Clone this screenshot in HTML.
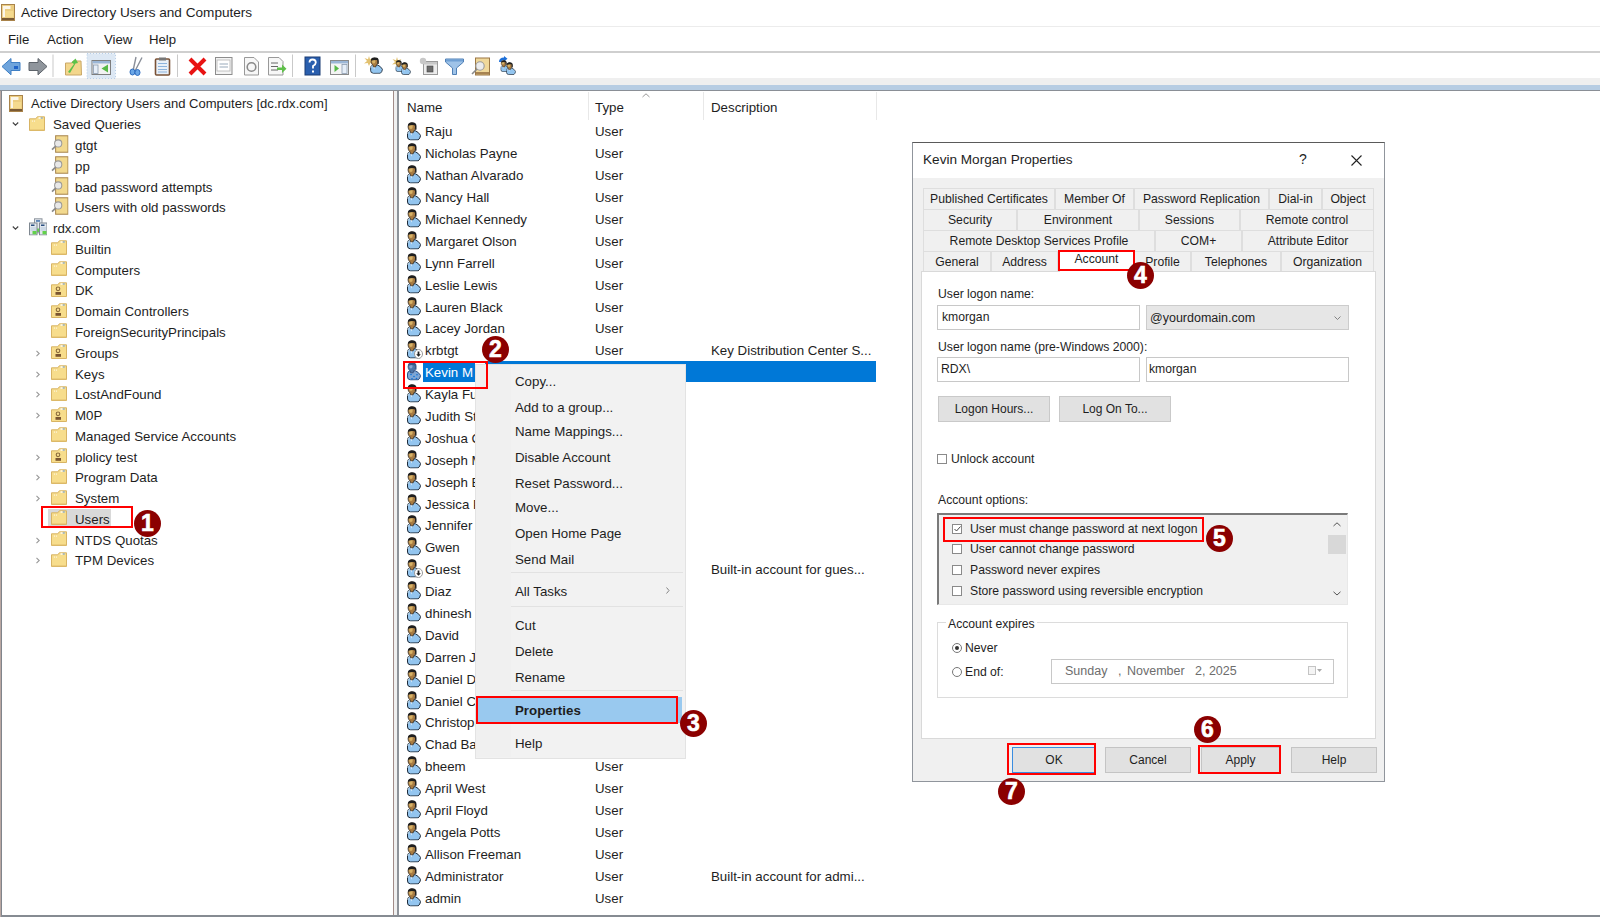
<!DOCTYPE html><html><head><meta charset="utf-8"><title>ADUC</title><style>
*{margin:0;padding:0;box-sizing:border-box}
html,body{width:1600px;height:917px;overflow:hidden;background:#fff}
body{position:relative;font-family:"Liberation Sans",sans-serif;font-size:13px;color:#1e1e1e}
.a{position:absolute}
.t{position:absolute;white-space:nowrap;line-height:20px;font-size:13.3px}
.d{position:absolute;white-space:nowrap;line-height:14px;font-size:12.2px}
svg.i{position:absolute;overflow:visible}
.rb{position:absolute;border:2px solid #f00}
.bd{position:absolute;width:27px;height:27px;border-radius:50%;background:#8b0000;color:#fff;font-weight:bold;font-size:23px;line-height:26px;text-align:center;-webkit-text-stroke:0.6px #fff}
.btn{position:absolute;background:#e1e1e1;border:1px solid #adadad;font-size:12px;text-align:center}
</style></head><body>
<svg width="0" height="0" style="position:absolute"><defs>
<symbol id="usr" viewBox="0 0 14 18.5">
 <path d="M0.5 12 Q0.5 9.2 3 8.8 L8.4 8.8 Q11.3 9.8 13.6 13.4 Q13.2 16.4 11.2 17.9 L3.6 18 Q0.5 17.5 0.5 15 Z" fill="#93c5ef" stroke="#1e2a38" stroke-width="1"/>
 <path d="M0.9 12 Q0.9 9.6 3 9.3" fill="none" stroke="#d4e8f8" stroke-width="0.8"/>
 <path d="M3.2 9.2 L4.3 13.6 L5.8 9.2Z" fill="#f4f8fc"/>
 <path d="M1 4.8 Q1 1 4.8 1 Q8.6 1 8.6 4.8 Q8.6 7.6 6.8 9 L6.2 10.8 L3.6 10.8 L3.2 9 Q1 7.6 1 4.8Z" fill="#a97c42" stroke="#2b2118" stroke-width="0.7"/>
 <ellipse cx="3.9" cy="4.8" rx="1.8" ry="2.3" fill="#d7b266"/>
 <path d="M0.8 3.8 Q1 0.3 5 0.2 Q9.5 0.2 9.5 4 L9.5 7.4 L8.2 8 L7.9 3.3 Q5 2.7 0.8 3.8Z" fill="#1f1f1f"/>
</symbol>
<symbol id="fld" viewBox="0 0 16 15">
 <path d="M0.5 2.8 L6.8 2.8 L8.3 0.8 L15.5 0.8 L15.5 14.5 L0.5 14.5 Z" fill="#f7dd8c" stroke="#d8b464" stroke-width="1"/>
 <path d="M1 14 L15 14" stroke="#e0bd6c" stroke-width="1"/>
 <ellipse cx="10.6" cy="2" rx="1.4" ry="0.8" fill="#fff"/>
 <ellipse cx="12.8" cy="2" rx="1.2" ry="0.8" fill="#86acd6"/>
 <circle cx="3.5" cy="5" r="0.6" fill="#fff"/><circle cx="5.5" cy="5" r="0.6" fill="#fff"/>
</symbol>
<symbol id="ou" viewBox="0 0 16 15">
 <path d="M0.5 2.8 L6.8 2.8 L8.3 0.8 L15.5 0.8 L15.5 14.5 L0.5 14.5 Z" fill="#f7dd8c" stroke="#d8b464" stroke-width="1"/>
 <ellipse cx="10.6" cy="2" rx="1.4" ry="0.8" fill="#fff"/>
 <ellipse cx="12.8" cy="2" rx="1.2" ry="0.8" fill="#86acd6"/>
 <circle cx="7" cy="6.8" r="1.8" fill="none" stroke="#8a6a3a" stroke-width="1.1"/>
 <rect x="4.5" y="10" width="5.5" height="2.8" fill="#7a5530"/>
</symbol>
<symbol id="qry" viewBox="0 0 17 17">
 <rect x="4.5" y="0.5" width="12" height="16" fill="#f2d98e" stroke="#a88650" stroke-width="1"/>
 <circle cx="7" cy="8" r="3.5" fill="#e8e8e8" stroke="#9a9a9a" stroke-width="1"/>
 <path d="M4.5 10.5 L1 14" stroke="#8a8a8a" stroke-width="1.6"/>
</symbol>
<symbol id="root" viewBox="0 0 14 17">
 <rect x="0.5" y="0.5" width="13" height="16" fill="#eccd80" stroke="#a9834a" stroke-width="1"/>
 <path d="M1.8 2 L9.5 2 L9.5 5 L4 5 L4 13 L1.8 13 Z" fill="#fbf6ea"/>
 <rect x="4.2" y="7" width="8" height="6" fill="#f5da8e"/>
 <rect x="1" y="14" width="12" height="2" fill="#7a5a34"/>
</symbol>
<symbol id="dom" viewBox="0 0 18 17.5">
 <rect x="5.5" y="0.8" width="7.5" height="14" fill="#e4e9ef" stroke="#8d959e" stroke-width="1"/>
 <rect x="7" y="2.2" width="4" height="1.5" fill="#3d6ea8"/>
 <rect x="8" y="10.5" width="4.5" height="3.5" fill="#62d24a"/>
 <rect x="0.5" y="5" width="7.5" height="12" fill="#e2e8ee" stroke="#7f8891" stroke-width="1"/>
 <rect x="2" y="6.5" width="3.5" height="1.5" fill="#2a4f80"/>
 <path d="M1.5 10 H7 M1.5 12 H7" stroke="#b7c9dc" stroke-width="1"/>
 <rect x="3.5" y="13" width="4" height="3.3" fill="#62d24a"/>
 <rect x="10.5" y="5" width="7.5" height="12" fill="#e2e8ee" stroke="#7f8891" stroke-width="1"/>
 <rect x="12" y="6.5" width="3.5" height="1.5" fill="#2a4f80"/>
 <path d="M11.5 10 H17 M11.5 12 H17" stroke="#b7c9dc" stroke-width="1"/>
 <rect x="13.5" y="13" width="4" height="3.3" fill="#62d24a"/>
</symbol>
<symbol id="star" viewBox="0 0 10 10"><path d="M5 0 L6 3.3 L9.5 2 L7 5 L10 7.5 L6.3 7 L5 10 L3.7 7 L0 7.5 L3 5 L0.5 2 L4 3.3 Z" fill="#e2c170"/></symbol>
<symbol id="dis" viewBox="0 0 9 10"><ellipse cx="4.5" cy="5" rx="4" ry="4.5" fill="#fff" stroke="#9a9a9a" stroke-width="1"/><path d="M3.6 2.5 H5.4 V5.2 H6.8 L4.5 7.8 L2.2 5.2 H3.6Z" fill="#222"/></symbol>
<symbol id="usrsel" viewBox="0 0 14 18.5">
 <path d="M0.5 12 Q0.5 9.2 3 8.8 L8.4 8.8 Q11.3 9.8 13.6 13.4 Q13.2 16.4 11.2 17.9 L3.6 18 Q0.5 17.5 0.5 15 Z" fill="#7ea6d4" stroke="#2c4f80" stroke-width="1"/>
 <path d="M1 4.8 Q1 1 4.8 1 Q8.6 1 8.6 4.8 Q8.6 7.6 6.8 9 L6.2 10.8 L3.6 10.8 L3.2 9 Q1 7.6 1 4.8Z" fill="#4f77a6" stroke="#2c4470" stroke-width="0.7"/>
 <ellipse cx="3.9" cy="4.6" rx="1.6" ry="2" fill="#86a9d2"/>
 <path d="M0.8 3.8 Q1 0.3 5 0.2 Q9.5 0.2 9.5 4 L9.5 7.4 L8.2 8 L7.9 3.3 Q5 2.7 0.8 3.8Z" fill="#3a5a88"/>
 <circle cx="4" cy="12.5" r="0.8" fill="#0a6fd8"/><circle cx="7" cy="14.5" r="0.8" fill="#0a6fd8"/><circle cx="10" cy="12.8" r="0.8" fill="#0a6fd8"/><circle cx="5" cy="16.8" r="0.8" fill="#0a6fd8"/><circle cx="9.5" cy="16.5" r="0.8" fill="#0a6fd8"/>
</symbol>
<symbol id="chevd" viewBox="0 0 8 5"><path d="M0.6 0.6 L4 4 L7.4 0.6" fill="none" stroke="#444" stroke-width="1.4"/></symbol>
<symbol id="chevr" viewBox="0 0 5 8"><path d="M0.6 0.6 L4 4 L0.6 7.4" fill="none" stroke="#9a9a9a" stroke-width="1.4"/></symbol>
</defs></svg>
<svg class="i" style="left:0.5px;top:4px" width="14" height="17"><use href="#root"/></svg>
<div class="t" style="left:21px;top:3px;font-size:13.6px">Active Directory Users and Computers</div>
<div class="a" style="left:0;top:26px;width:1600px;height:1px;background:#ececec"></div>
<div class="t" style="left:8px;top:30px;font-size:13.2px">File</div>
<div class="t" style="left:47px;top:30px;font-size:13.2px">Action</div>
<div class="t" style="left:104px;top:30px;font-size:13.2px">View</div>
<div class="t" style="left:149px;top:30px;font-size:13.2px">Help</div>
<div class="a" style="left:0;top:51px;width:1600px;height:2px;background:#cfcfcf"></div>
<div class="a" style="left:0;top:78px;width:1600px;height:8px;background:#efefef"></div>
<div class="a" style="left:0;top:85px;width:1600px;height:5px;background:#b7cde3"></div>
<div class="a" style="left:0;top:90px;width:1600px;height:1px;background:#8a8f96"></div>
<svg class="i" style="left:0;top:52px" width="530" height="27" viewBox="0 52 530 27">
<rect x="87" y="53.5" width="28.5" height="25" fill="#dde8f4" stroke="#b8cfe8" stroke-width="1" stroke-dasharray="1 2"/>
<path d="M2 66.5 L11 58.5 L11 62.5 L20 62.5 L20 70.5 L11 70.5 L11 74.8 Z" fill="#6ea4dc" stroke="#3f7fc4" stroke-width="1"/>
<rect x="14" y="66" width="4" height="3" fill="#1f63c8"/>
<path d="M47 66.5 L38 58.5 L38 62.5 L29 62.5 L29 70.5 L38 70.5 L38 74.8 Z" fill="#8f959c" stroke="#5d636a" stroke-width="1"/>
<rect x="52.5" y="54.5" width="1" height="22.5" fill="#c9c9c9"/>
<path d="M65.5 63 L72 63 L73 61 L81 61 L81.5 75 L65.5 75 Z" fill="#f3d68c" stroke="#c9a767" stroke-width="1"/>
<path d="M68 72 L74 64 L71.5 62.5 L75.5 58.5 L78 63 L75.5 63.5 L70 73 Z" fill="#5bc24a"/>
<rect x="92" y="60.5" width="18.5" height="14" fill="#f2f2f2" stroke="#7d7d7d" stroke-width="1"/>
<rect x="92.5" y="61" width="17.5" height="2.5" fill="#9bb6d6"/>
<rect x="93.5" y="65" width="4.5" height="8.5" fill="#e6eef8" stroke="#8a9bb0" stroke-width="0.8"/>
<path d="M108 64.5 L101.5 68.5 L108 72.5 Z" fill="#57b947"/>
<path d="M136 57 L133 71 M142 57.5 L135 71" stroke="#8a8f99" stroke-width="1.4"/>
<ellipse cx="132.5" cy="72" rx="2.5" ry="3" fill="#6aa6e6" stroke="#2d6cc0" stroke-width="1"/>
<ellipse cx="137.5" cy="72.5" rx="2.5" ry="3" fill="#6aa6e6" stroke="#2d6cc0" stroke-width="1"/>
<rect x="155.5" y="59" width="14" height="16" rx="1" fill="#e9f0f8" stroke="#7a5236" stroke-width="1.6"/>
<rect x="159" y="57.5" width="7" height="3" fill="#777"/>
<path d="M158 63.5 H167 M158 66.5 H167 M158 69.5 H167 M158 72 H167" stroke="#8db3dc" stroke-width="1"/>
<rect x="177" y="54.5" width="1" height="22.5" fill="#c9c9c9"/>
<path d="M190 59 L205 74 M205 59 L190 74" stroke="#e81313" stroke-width="4"/>
<rect x="215.5" y="57.5" width="16.5" height="17" fill="#f4f4f4" stroke="#8d8d8d" stroke-width="1"/>
<rect x="217" y="60" width="13" height="11" fill="#fff" stroke="#b5b5b5" stroke-width="0.8"/>
<path d="M219.5 64 H228 M219.5 67 H228" stroke="#9ab" stroke-width="1"/>
<path d="M244.5 57.5 L254 57.5 L258.5 62 L258.5 75 L244.5 75 Z" fill="#f7f7f7" stroke="#999" stroke-width="1"/>
<circle cx="251.5" cy="67" r="4.3" fill="none" stroke="#8a8a8a" stroke-width="1.6"/>
<path d="M268.5 57.5 L279 57.5 L283 61.5 L283 75 L268.5 75 Z" fill="#f7f7f7" stroke="#999" stroke-width="1"/>
<path d="M271 63 H278 M271 66.5 H278 M271 70 H278" stroke="#666" stroke-width="1"/>
<path d="M277 67.5 H282 V64.5 L286.5 68.8 L282 73 V70 H277 Z" fill="#5fbf4a"/>
<rect x="292" y="54.5" width="1" height="22.5" fill="#c9c9c9"/>
<rect x="305" y="57" width="15" height="18" fill="#2a5fae" stroke="#1b3d75" stroke-width="1"/>
<path d="M309.5 62.5 Q309.5 59.5 312.5 59.5 Q315.8 59.5 315.8 62.5 Q315.8 64.5 313 66 L313 68.5" fill="none" stroke="#fff" stroke-width="1.8"/>
<rect x="312" y="70.5" width="2" height="2" fill="#fff"/>
<rect x="330.5" y="60.5" width="18" height="14" fill="#f4f4f4" stroke="#8a8a8a" stroke-width="1"/>
<rect x="331" y="61" width="17" height="2.5" fill="#9bb6d6"/>
<rect x="342" y="64.5" width="5" height="9" fill="#e6eef8" stroke="#8a9bb0" stroke-width="0.8"/>
<path d="M334.5 65 L339 68.5 L334.5 72 Z" fill="#57b947"/>
<rect x="355" y="54.5" width="1" height="22.5" fill="#c9c9c9"/>
</svg>
<svg class="i" style="left:364px;top:56px" width="10" height="10"><use href="#star"/></svg>
<svg class="i" style="left:370px;top:57px" width="13" height="17" viewBox="0 0 14 18"><use href="#usr"/></svg>
<svg class="i" style="left:391.5px;top:57px" width="10" height="10"><use href="#star"/></svg>
<svg class="i" style="left:395px;top:60px" width="10" height="12" viewBox="0 0 14 18"><use href="#usr"/></svg>
<svg class="i" style="left:400.5px;top:62px" width="10" height="13" viewBox="0 0 14 18"><use href="#usr"/></svg>
<svg class="i" style="left:419px;top:57px" width="20" height="19">
<rect x="4.5" y="4.5" width="14" height="13" fill="#ececec" stroke="#9a9a9a"/>
<rect x="5" y="5" width="13" height="2.5" fill="#c8c8c8"/>
<rect x="8" y="9" width="6" height="6" fill="#6b6b6b" stroke="#444" stroke-width="0.6"/>
<circle cx="4" cy="4" r="3.2" fill="#c8c8c8"/>
</svg>
<svg class="i" style="left:445px;top:58px" width="19" height="17">
<path d="M0.5 1 L18.5 1 L18.5 4 L11.5 10 L11.5 16.5 L7.5 16.5 L7.5 10 L0.5 4 Z" fill="#9fc3e8" stroke="#4f7fb5" stroke-width="1"/>
<rect x="1" y="1.5" width="17" height="2" fill="#6f9fd3"/>
</svg>
<svg class="i" style="left:471px;top:57px" width="19" height="19">
<rect x="4.5" y="1" width="14" height="17" fill="#f0d89a" stroke="#9b7745" stroke-width="1"/>
<rect x="5" y="15" width="13" height="2.5" fill="#a78352"/>
<circle cx="9" cy="9" r="4.2" fill="#ececec" stroke="#9a9a9a" stroke-width="1.1"/>
<path d="M6 12 L1 17" stroke="#8a8a8a" stroke-width="1.6"/>
</svg>
<svg class="i" style="left:498px;top:56px" width="10" height="7"><path d="M1 6 Q1 1.5 6 1.5 L6 0 L9.5 2.8 L6 5.5 L6 4 Q3.5 4 3 6 Z" fill="#1d6fd8"/></svg>
<svg class="i" style="left:500px;top:60px" width="10" height="12" viewBox="0 0 14 18"><use href="#usr"/></svg>
<svg class="i" style="left:506px;top:62px" width="10" height="13" viewBox="0 0 14 18"><use href="#usr"/></svg>
<div class="a" style="left:0;top:91px;width:1px;height:826px;background:#b9a7a2"></div>
<div class="a" style="left:1px;top:91px;width:1px;height:826px;background:#80858c"></div>
<div class="a" style="left:393px;top:91px;width:1px;height:826px;background:#a28c88"></div>
<div class="a" style="left:394px;top:91px;width:3px;height:826px;background:#f0f0f0"></div>
<div class="a" style="left:397px;top:91px;width:2px;height:826px;background:#8e939a"></div>
<div class="a" style="left:1px;top:915px;width:1599px;height:2px;background:#868b92"></div>
<svg class="i" style="left:9px;top:95px" width="14" height="17"><use href="#root"/></svg>
<div class="t" style="left:31px;top:94px;font-size:13.05px">Active Directory Users and Computers [dc.rdx.com]</div>
<svg class="i" style="left:29px;top:116px" width="16" height="15"><use href="#fld"/></svg>
<svg class="i" style="left:12px;top:122px" width="7" height="4"><use href="#chevd"/></svg>
<div class="t" style="left:53px;top:115px">Saved Queries</div>
<svg class="i" style="left:50.5px;top:135px" width="17.5" height="18"><use href="#qry"/></svg>
<div class="t" style="left:75px;top:136px">gtgt</div>
<svg class="i" style="left:50.5px;top:156px" width="17.5" height="18"><use href="#qry"/></svg>
<div class="t" style="left:75px;top:157px">pp</div>
<svg class="i" style="left:50.5px;top:177px" width="17.5" height="18"><use href="#qry"/></svg>
<div class="t" style="left:75px;top:178px">bad password attempts</div>
<svg class="i" style="left:50.5px;top:197px" width="17.5" height="18"><use href="#qry"/></svg>
<div class="t" style="left:75px;top:198px">Users with old passwords</div>
<svg class="i" style="left:29.4px;top:217.8px" width="18" height="17.5"><use href="#dom"/></svg>
<svg class="i" style="left:12px;top:226px" width="7" height="4"><use href="#chevd"/></svg>
<div class="t" style="left:53px;top:219px">rdx.com</div>
<svg class="i" style="left:51px;top:240px" width="16" height="15"><use href="#fld"/></svg>
<div class="t" style="left:75px;top:240px">Builtin</div>
<svg class="i" style="left:51px;top:261px" width="16" height="15"><use href="#fld"/></svg>
<div class="t" style="left:75px;top:261px">Computers</div>
<svg class="i" style="left:51px;top:282px" width="16" height="15"><use href="#ou"/></svg>
<div class="t" style="left:75px;top:281px">DK</div>
<svg class="i" style="left:51px;top:303px" width="16" height="15"><use href="#ou"/></svg>
<div class="t" style="left:75px;top:302px">Domain Controllers</div>
<svg class="i" style="left:51px;top:323px" width="16" height="15"><use href="#fld"/></svg>
<div class="t" style="left:75px;top:323px">ForeignSecurityPrincipals</div>
<svg class="i" style="left:51px;top:344px" width="16" height="15"><use href="#ou"/></svg>
<svg class="i" style="left:36px;top:350px" width="4" height="7"><use href="#chevr"/></svg>
<div class="t" style="left:75px;top:344px">Groups</div>
<svg class="i" style="left:51px;top:365px" width="16" height="15"><use href="#fld"/></svg>
<svg class="i" style="left:36px;top:371px" width="4" height="7"><use href="#chevr"/></svg>
<div class="t" style="left:75px;top:365px">Keys</div>
<svg class="i" style="left:51px;top:386px" width="16" height="15"><use href="#fld"/></svg>
<svg class="i" style="left:36px;top:391px" width="4" height="7"><use href="#chevr"/></svg>
<div class="t" style="left:75px;top:385px">LostAndFound</div>
<svg class="i" style="left:51px;top:407px" width="16" height="15"><use href="#ou"/></svg>
<svg class="i" style="left:36px;top:412px" width="4" height="7"><use href="#chevr"/></svg>
<div class="t" style="left:75px;top:406px">M0P</div>
<svg class="i" style="left:51px;top:427px" width="16" height="15"><use href="#fld"/></svg>
<div class="t" style="left:75px;top:427px">Managed Service Accounts</div>
<svg class="i" style="left:51px;top:448px" width="16" height="15"><use href="#ou"/></svg>
<svg class="i" style="left:36px;top:454px" width="4" height="7"><use href="#chevr"/></svg>
<div class="t" style="left:75px;top:448px">plolicy test</div>
<svg class="i" style="left:51px;top:469px" width="16" height="15"><use href="#fld"/></svg>
<svg class="i" style="left:36px;top:474px" width="4" height="7"><use href="#chevr"/></svg>
<div class="t" style="left:75px;top:468px">Program Data</div>
<svg class="i" style="left:51px;top:490px" width="16" height="15"><use href="#fld"/></svg>
<svg class="i" style="left:36px;top:495px" width="4" height="7"><use href="#chevr"/></svg>
<div class="t" style="left:75px;top:489px">System</div>
<svg class="i" style="left:51px;top:510px" width="16" height="15"><use href="#fld"/></svg>
<div class="a" style="left:48px;top:509px;width:63px;height:18px;background:#d9d9d9"></div>
<svg class="i" style="left:51px;top:510px" width="16" height="15"><use href="#fld"/></svg>
<div class="t" style="left:75px;top:510px">Users</div>
<svg class="i" style="left:51px;top:531px" width="16" height="15"><use href="#fld"/></svg>
<svg class="i" style="left:36px;top:537px" width="4" height="7"><use href="#chevr"/></svg>
<div class="t" style="left:75px;top:531px">NTDS Quotas</div>
<svg class="i" style="left:51px;top:552px" width="16" height="15"><use href="#fld"/></svg>
<svg class="i" style="left:36px;top:557px" width="4" height="7"><use href="#chevr"/></svg>
<div class="t" style="left:75px;top:551px">TPM Devices</div>
<div class="t" style="left:407px;top:98px">Name</div>
<div class="t" style="left:595px;top:98px">Type</div>
<div class="t" style="left:711px;top:98px">Description</div>
<div class="a" style="left:588px;top:92px;width:1px;height:28px;background:#e8e8e8"></div>
<div class="a" style="left:703px;top:92px;width:1px;height:28px;background:#e8e8e8"></div>
<div class="a" style="left:876px;top:92px;width:1px;height:28px;background:#e8e8e8"></div>
<svg class="i" style="left:642px;top:93px" width="8" height="5"><path d="M0.5 4 L4 0.8 L7.5 4" fill="none" stroke="#999" stroke-width="1"/></svg>
<svg class="i" style="left:407.4px;top:122px" width="14" height="18.5"><use href="#usr"/></svg>
<div class="t" style="left:425px;top:122px">Raju</div>
<div class="t" style="left:595px;top:122px">User</div>
<svg class="i" style="left:407.4px;top:143px" width="14" height="18.5"><use href="#usr"/></svg>
<div class="t" style="left:425px;top:144px">Nicholas Payne</div>
<div class="t" style="left:595px;top:144px">User</div>
<svg class="i" style="left:407.4px;top:165px" width="14" height="18.5"><use href="#usr"/></svg>
<div class="t" style="left:425px;top:166px">Nathan Alvarado</div>
<div class="t" style="left:595px;top:166px">User</div>
<svg class="i" style="left:407.4px;top:187px" width="14" height="18.5"><use href="#usr"/></svg>
<div class="t" style="left:425px;top:188px">Nancy Hall</div>
<div class="t" style="left:595px;top:188px">User</div>
<svg class="i" style="left:407.4px;top:209px" width="14" height="18.5"><use href="#usr"/></svg>
<div class="t" style="left:425px;top:210px">Michael Kennedy</div>
<div class="t" style="left:595px;top:210px">User</div>
<svg class="i" style="left:407.4px;top:231px" width="14" height="18.5"><use href="#usr"/></svg>
<div class="t" style="left:425px;top:232px">Margaret Olson</div>
<div class="t" style="left:595px;top:232px">User</div>
<svg class="i" style="left:407.4px;top:253px" width="14" height="18.5"><use href="#usr"/></svg>
<div class="t" style="left:425px;top:254px">Lynn Farrell</div>
<div class="t" style="left:595px;top:254px">User</div>
<svg class="i" style="left:407.4px;top:275px" width="14" height="18.5"><use href="#usr"/></svg>
<div class="t" style="left:425px;top:276px">Leslie Lewis</div>
<div class="t" style="left:595px;top:276px">User</div>
<svg class="i" style="left:407.4px;top:297px" width="14" height="18.5"><use href="#usr"/></svg>
<div class="t" style="left:425px;top:298px">Lauren Black</div>
<div class="t" style="left:595px;top:298px">User</div>
<svg class="i" style="left:407.4px;top:318px" width="14" height="18.5"><use href="#usr"/></svg>
<div class="t" style="left:425px;top:319px">Lacey Jordan</div>
<div class="t" style="left:595px;top:319px">User</div>
<svg class="i" style="left:407.4px;top:340px" width="14" height="18.5"><use href="#usr"/></svg>
<svg class="i" style="left:414px;top:349px" width="9" height="10"><use href="#dis"/></svg>
<div class="t" style="left:425px;top:341px">krbtgt</div>
<div class="t" style="left:595px;top:341px">User</div>
<div class="t" style="left:711px;top:341px">Key Distribution Center S...</div>
<div class="a" style="left:685px;top:361px;width:191px;height:21px;background:#0078d7"></div>
<div class="a" style="left:485px;top:361px;width:200px;height:3px;background:#0078d7"></div>
<div class="a" style="left:423px;top:363px;width:52px;height:19px;background:#0078d7"></div>
<svg class="i" style="left:407.4px;top:362px" width="14" height="18.5"><use href="#usrsel"/></svg>
<div class="t" style="left:425px;top:363px;color:#fff">Kevin M</div>
<svg class="i" style="left:407.4px;top:384px" width="14" height="18.5"><use href="#usr"/></svg>
<div class="t" style="left:425px;top:385px">Kayla Fuller</div>
<div class="t" style="left:595px;top:385px">User</div>
<svg class="i" style="left:407.4px;top:406px" width="14" height="18.5"><use href="#usr"/></svg>
<div class="t" style="left:425px;top:407px">Judith Stone</div>
<div class="t" style="left:595px;top:407px">User</div>
<svg class="i" style="left:407.4px;top:428px" width="14" height="18.5"><use href="#usr"/></svg>
<div class="t" style="left:425px;top:429px">Joshua Carter</div>
<div class="t" style="left:595px;top:429px">User</div>
<svg class="i" style="left:407.4px;top:450px" width="14" height="18.5"><use href="#usr"/></svg>
<div class="t" style="left:425px;top:451px">Joseph Miller</div>
<div class="t" style="left:595px;top:451px">User</div>
<svg class="i" style="left:407.4px;top:472px" width="14" height="18.5"><use href="#usr"/></svg>
<div class="t" style="left:425px;top:473px">Joseph Evans</div>
<div class="t" style="left:595px;top:473px">User</div>
<svg class="i" style="left:407.4px;top:494px" width="14" height="18.5"><use href="#usr"/></svg>
<div class="t" style="left:425px;top:495px">Jessica Parker</div>
<div class="t" style="left:595px;top:495px">User</div>
<svg class="i" style="left:407.4px;top:515px" width="14" height="18.5"><use href="#usr"/></svg>
<div class="t" style="left:425px;top:516px">Jennifer Lee</div>
<div class="t" style="left:595px;top:516px">User</div>
<svg class="i" style="left:407.4px;top:537px" width="14" height="18.5"><use href="#usr"/></svg>
<div class="t" style="left:425px;top:538px">Gwen</div>
<div class="t" style="left:595px;top:538px">User</div>
<svg class="i" style="left:407.4px;top:559px" width="14" height="18.5"><use href="#usr"/></svg>
<svg class="i" style="left:414px;top:568px" width="9" height="10"><use href="#dis"/></svg>
<div class="t" style="left:425px;top:560px">Guest</div>
<div class="t" style="left:595px;top:560px">User</div>
<div class="t" style="left:711px;top:560px">Built-in account for gues...</div>
<svg class="i" style="left:407.4px;top:581px" width="14" height="18.5"><use href="#usr"/></svg>
<div class="t" style="left:425px;top:582px">Diaz</div>
<div class="t" style="left:595px;top:582px">User</div>
<svg class="i" style="left:407.4px;top:603px" width="14" height="18.5"><use href="#usr"/></svg>
<div class="t" style="left:425px;top:604px">dhinesh</div>
<div class="t" style="left:595px;top:604px">User</div>
<svg class="i" style="left:407.4px;top:625px" width="14" height="18.5"><use href="#usr"/></svg>
<div class="t" style="left:425px;top:626px">David</div>
<div class="t" style="left:595px;top:626px">User</div>
<svg class="i" style="left:407.4px;top:647px" width="14" height="18.5"><use href="#usr"/></svg>
<div class="t" style="left:425px;top:648px">Darren Jimenez</div>
<div class="t" style="left:595px;top:648px">User</div>
<svg class="i" style="left:407.4px;top:669px" width="14" height="18.5"><use href="#usr"/></svg>
<div class="t" style="left:425px;top:670px">Daniel Diaz</div>
<div class="t" style="left:595px;top:670px">User</div>
<svg class="i" style="left:407.4px;top:691px" width="14" height="18.5"><use href="#usr"/></svg>
<div class="t" style="left:425px;top:692px">Daniel Cruz</div>
<div class="t" style="left:595px;top:692px">User</div>
<svg class="i" style="left:407.4px;top:712px" width="14" height="18.5"><use href="#usr"/></svg>
<div class="t" style="left:425px;top:713px">Christopher</div>
<div class="t" style="left:595px;top:713px">User</div>
<svg class="i" style="left:407.4px;top:734px" width="14" height="18.5"><use href="#usr"/></svg>
<div class="t" style="left:425px;top:735px">Chad Barnes</div>
<div class="t" style="left:595px;top:735px">User</div>
<svg class="i" style="left:407.4px;top:756px" width="14" height="18.5"><use href="#usr"/></svg>
<div class="t" style="left:425px;top:757px">bheem</div>
<div class="t" style="left:595px;top:757px">User</div>
<svg class="i" style="left:407.4px;top:778px" width="14" height="18.5"><use href="#usr"/></svg>
<div class="t" style="left:425px;top:779px">April West</div>
<div class="t" style="left:595px;top:779px">User</div>
<svg class="i" style="left:407.4px;top:800px" width="14" height="18.5"><use href="#usr"/></svg>
<div class="t" style="left:425px;top:801px">April Floyd</div>
<div class="t" style="left:595px;top:801px">User</div>
<svg class="i" style="left:407.4px;top:822px" width="14" height="18.5"><use href="#usr"/></svg>
<div class="t" style="left:425px;top:823px">Angela Potts</div>
<div class="t" style="left:595px;top:823px">User</div>
<svg class="i" style="left:407.4px;top:844px" width="14" height="18.5"><use href="#usr"/></svg>
<div class="t" style="left:425px;top:845px">Allison Freeman</div>
<div class="t" style="left:595px;top:845px">User</div>
<svg class="i" style="left:407.4px;top:866px" width="14" height="18.5"><use href="#usr"/></svg>
<div class="t" style="left:425px;top:867px">Administrator</div>
<div class="t" style="left:595px;top:867px">User</div>
<div class="t" style="left:711px;top:867px">Built-in account for admi...</div>
<svg class="i" style="left:407.4px;top:888px" width="14" height="18.5"><use href="#usr"/></svg>
<div class="t" style="left:425px;top:889px">admin</div>
<div class="t" style="left:595px;top:889px">User</div>
<div class="a" style="left:475px;top:364px;width:211px;height:395px;background:#f2f2f2;border:1px solid #e3e3e3"></div>
<div class="a" style="left:476px;top:365px;width:35px;height:392px;background:#f0f0f0"></div>
<div class="t" style="left:515px;top:372px">Copy...</div>
<div class="t" style="left:515px;top:398px">Add to a group...</div>
<div class="t" style="left:515px;top:422px">Name Mappings...</div>
<div class="t" style="left:515px;top:448px">Disable Account</div>
<div class="t" style="left:515px;top:474px">Reset Password...</div>
<div class="t" style="left:515px;top:498px">Move...</div>
<div class="t" style="left:515px;top:524px">Open Home Page</div>
<div class="t" style="left:515px;top:550px">Send Mail</div>
<div class="t" style="left:515px;top:582px">All Tasks</div>
<div class="t" style="left:515px;top:616px">Cut</div>
<div class="t" style="left:515px;top:642px">Delete</div>
<div class="t" style="left:515px;top:668px">Rename</div>
<div class="t" style="left:515px;top:734px">Help</div>
<div class="a" style="left:511px;top:572px;width:172px;height:1px;background:#e2e2e2"></div>
<div class="a" style="left:511px;top:606px;width:172px;height:1px;background:#e2e2e2"></div>
<div class="a" style="left:511px;top:690px;width:172px;height:1px;background:#e2e2e2"></div>
<svg class="i" style="left:666px;top:587px" width="4" height="7"><path d="M0.5 0.5 L3 3.5 L0.5 6.5" fill="none" stroke="#777" stroke-width="0.9"/></svg>
<div class="a" style="left:477px;top:697px;width:205px;height:26px;background:#99c9ef"></div>
<div class="t" style="left:515px;top:701px;font-weight:bold">Properties</div>
<div class="a" style="left:912px;top:142px;width:473px;height:640px;background:#f0f0f0;border:1px solid #90959c;border-top-color:#5a5a5a"></div>
<div class="a" style="left:913px;top:143px;width:471px;height:35px;background:#fff"></div>
<div class="t" style="left:923px;top:150px;font-size:13.6px">Kevin Morgan Properties</div>
<div class="t" style="left:1299px;top:149px;font-size:14px">?</div>
<svg class="i" style="left:1351px;top:155px" width="11" height="11"><path d="M0.5 0.5 L10.5 10.5 M10.5 0.5 L0.5 10.5" stroke="#222" stroke-width="1.1"/></svg>
<div class="d" style="left:923px;top:188px;width:132px;height:21px;border:1px solid #dedede;border-bottom:none;background:#f0f0f0;text-align:center;line-height:21px">Published Certificates</div>
<div class="d" style="left:1055px;top:188px;width:79px;height:21px;border:1px solid #dedede;border-bottom:none;background:#f0f0f0;text-align:center;line-height:21px">Member Of</div>
<div class="d" style="left:1134px;top:188px;width:135px;height:21px;border:1px solid #dedede;border-bottom:none;background:#f0f0f0;text-align:center;line-height:21px">Password Replication</div>
<div class="d" style="left:1269px;top:188px;width:53px;height:21px;border:1px solid #dedede;border-bottom:none;background:#f0f0f0;text-align:center;line-height:21px">Dial-in</div>
<div class="d" style="left:1322px;top:188px;width:52px;height:21px;border:1px solid #dedede;border-bottom:none;background:#f0f0f0;text-align:center;line-height:21px">Object</div>
<div class="d" style="left:923px;top:209px;width:94px;height:21px;border:1px solid #dedede;border-bottom:none;background:#f0f0f0;text-align:center;line-height:21px">Security</div>
<div class="d" style="left:1017px;top:209px;width:122px;height:21px;border:1px solid #dedede;border-bottom:none;background:#f0f0f0;text-align:center;line-height:21px">Environment</div>
<div class="d" style="left:1139px;top:209px;width:101px;height:21px;border:1px solid #dedede;border-bottom:none;background:#f0f0f0;text-align:center;line-height:21px">Sessions</div>
<div class="d" style="left:1240px;top:209px;width:134px;height:21px;border:1px solid #dedede;border-bottom:none;background:#f0f0f0;text-align:center;line-height:21px">Remote control</div>
<div class="d" style="left:923px;top:230px;width:232px;height:21px;border:1px solid #dedede;border-bottom:none;background:#f0f0f0;text-align:center;line-height:21px">Remote Desktop Services Profile</div>
<div class="d" style="left:1155px;top:230px;width:87px;height:21px;border:1px solid #dedede;border-bottom:none;background:#f0f0f0;text-align:center;line-height:21px">COM+</div>
<div class="d" style="left:1242px;top:230px;width:132px;height:21px;border:1px solid #dedede;border-bottom:none;background:#f0f0f0;text-align:center;line-height:21px">Attribute Editor</div>
<div class="d" style="left:923px;top:251px;width:68px;height:21px;border:1px solid #dedede;border-bottom:none;background:#f0f0f0;text-align:center;line-height:21px">General</div>
<div class="d" style="left:991px;top:251px;width:67px;height:21px;border:1px solid #dedede;border-bottom:none;background:#f0f0f0;text-align:center;line-height:21px">Address</div>
<div class="d" style="left:1058px;top:251px;width:76px;height:21px;border:1px solid #dedede;border-bottom:none;background:#f0f0f0;text-align:center;line-height:21px">Account</div>
<div class="d" style="left:1134px;top:251px;width:57px;height:21px;border:1px solid #dedede;border-bottom:none;background:#f0f0f0;text-align:center;line-height:21px">Profile</div>
<div class="d" style="left:1191px;top:251px;width:90px;height:21px;border:1px solid #dedede;border-bottom:none;background:#f0f0f0;text-align:center;line-height:21px">Telephones</div>
<div class="d" style="left:1281px;top:251px;width:93px;height:21px;border:1px solid #dedede;border-bottom:none;background:#f0f0f0;text-align:center;line-height:21px">Organization</div>
<div class="a" style="left:921px;top:271px;width:455px;height:468px;background:#fff;border:1px solid #d9d9d9"></div>
<div class="d" style="left:1060px;top:250px;width:73px;height:22px;background:#fff;text-align:center;line-height:19px">Account</div>
<div class="d" style="left:938px;top:287px">User logon name:</div>
<div class="a" style="left:937px;top:305px;width:203px;height:25px;background:#fff;border:1px solid #c8c8c8"></div>
<div class="d" style="left:942px;top:310px">kmorgan</div>
<div class="a" style="left:1146px;top:305px;width:203px;height:25px;background:#e6e6e6;border:1px solid #cccccc"></div>
<div class="d" style="left:1150px;top:311px;font-size:12.5px">@yourdomain.com</div>
<svg class="i" style="left:1334px;top:316px" width="7" height="4"><path d="M0.5 0.5 L3.5 3.5 L6.5 0.5" fill="none" stroke="#777" stroke-width="0.9"/></svg>
<div class="d" style="left:938px;top:340px">User logon name (pre-Windows 2000):</div>
<div class="a" style="left:937px;top:357px;width:203px;height:25px;background:#fff;border:1px solid #c8c8c8"></div>
<div class="d" style="left:941px;top:362px">RDX\</div>
<div class="a" style="left:1146px;top:357px;width:203px;height:25px;background:#fff;border:1px solid #c8c8c8"></div>
<div class="d" style="left:1149px;top:362px">kmorgan</div>
<div class="btn" style="left:938px;top:396px;width:112px;height:26px;line-height:24px;border-color:#c9c9c9">Logon Hours...</div>
<div class="btn" style="left:1059px;top:396px;width:112px;height:26px;line-height:24px;border-color:#c9c9c9">Log On To...</div>
<div class="a" style="left:937px;top:454px;width:10px;height:10px;border:1px solid #8a8a8a;background:#fff"></div>
<div class="d" style="left:951px;top:452px">Unlock account</div>
<div class="d" style="left:938px;top:493px">Account options:</div>
<div class="a" style="left:937px;top:513px;width:411px;height:92px;background:#f0f0f0;border-top:2px solid #7a7a7a;border-left:2px solid #7a7a7a;border-right:1px solid #e8e8e8;border-bottom:1px solid #e8e8e8"></div>
<div class="a" style="left:952px;top:524px;width:10px;height:10px;border:1px solid #8a8a8a;background:#fff"></div>
<svg class="i" style="left:954px;top:526px" width="7" height="6"><path d="M0.5 3 L2.5 5 L6.5 0.5" fill="none" stroke="#444" stroke-width="1"/></svg>
<div class="d" style="left:970px;top:522px">User must change password at next logon</div>
<div class="a" style="left:952px;top:544px;width:10px;height:10px;border:1px solid #8a8a8a;background:#fff"></div>
<div class="d" style="left:970px;top:542px">User cannot change password</div>
<div class="a" style="left:952px;top:565px;width:10px;height:10px;border:1px solid #8a8a8a;background:#fff"></div>
<div class="d" style="left:970px;top:563px">Password never expires</div>
<div class="a" style="left:952px;top:586px;width:10px;height:10px;border:1px solid #8a8a8a;background:#fff"></div>
<div class="d" style="left:970px;top:584px">Store password using reversible encryption</div>
<div class="a" style="left:1327px;top:515px;width:20px;height:89px;background:#f0f0f0"></div>
<div class="a" style="left:1328px;top:535px;width:18px;height:19px;background:#d8d8d8"></div>
<svg class="i" style="left:1333px;top:522px" width="8" height="5"><path d="M0.5 4 L4 0.8 L7.5 4" fill="none" stroke="#555" stroke-width="1"/></svg>
<svg class="i" style="left:1333px;top:591px" width="8" height="5"><path d="M0.5 0.8 L4 4 L7.5 0.8" fill="none" stroke="#555" stroke-width="1"/></svg>
<div class="a" style="left:937px;top:622px;width:411px;height:76px;border:1px solid #dcdcdc"></div>
<div class="d" style="left:946px;top:617px;background:#fff;padding:0 2px">Account expires</div>
<div class="a" style="left:952px;top:643px;width:10px;height:10px;border:1px solid #777;border-radius:50%;background:#fff"></div>
<div class="a" style="left:955px;top:646px;width:4px;height:4px;border-radius:50%;background:#333"></div>
<div class="d" style="left:965px;top:641px">Never</div>
<div class="a" style="left:952px;top:667px;width:10px;height:10px;border:1px solid #777;border-radius:50%;background:#fff"></div>
<div class="d" style="left:965px;top:665px">End of:</div>
<div class="a" style="left:1051px;top:659px;width:283px;height:25px;border:1px solid #c8c8c8;background:#fff"></div>
<div class="d" style="left:1065px;top:664px;color:#6d6d6d;font-size:12.5px">Sunday</div>
<div class="d" style="left:1118px;top:664px;color:#6d6d6d;font-size:12.5px">,</div>
<div class="d" style="left:1127px;top:664px;color:#6d6d6d;font-size:12.5px">November</div>
<div class="d" style="left:1195px;top:664px;color:#6d6d6d;font-size:12.5px">2, 2025</div>
<div class="a" style="left:1308px;top:666px;width:8px;height:9px;border:1px solid #c4c4c4;background:#f4f4f4"></div>
<svg class="i" style="left:1317px;top:669px" width="5" height="3"><path d="M0 0 L5 0 L2.5 3Z" fill="#aaa"/></svg>
<div class="btn" style="left:1012px;top:747px;width:84px;height:26px;line-height:24px;border-color:#c4c4c4">OK</div>
<div class="btn" style="left:1105px;top:747px;width:86px;height:26px;line-height:24px;border-color:#c4c4c4">Cancel</div>
<div class="btn" style="left:1201px;top:747px;width:79px;height:26px;line-height:24px;border-color:#c4c4c4">Apply</div>
<div class="btn" style="left:1291px;top:747px;width:86px;height:26px;line-height:24px;border-color:#c4c4c4">Help</div>
<div class="a" style="left:1012px;top:747px;width:84px;height:26px;border:1px solid #3a8de0"></div>
<div class="rb" style="left:41px;top:506px;width:92px;height:22px"></div>
<div class="rb" style="left:403px;top:361px;width:85px;height:28px"></div>
<div class="rb" style="left:476px;top:696px;width:202px;height:28px"></div>
<div class="rb" style="left:1058px;top:250px;width:77px;height:21px"></div>
<div class="rb" style="left:943px;top:517px;width:261px;height:25px"></div>
<div class="rb" style="left:1007px;top:743px;width:89px;height:32px"></div>
<div class="rb" style="left:1198px;top:745px;width:83px;height:29px"></div>
<div class="bd" style="left:134px;top:510px">1</div>
<div class="bd" style="left:482px;top:336px">2</div>
<div class="bd" style="left:680px;top:710px">3</div>
<div class="bd" style="left:1127px;top:262px">4</div>
<div class="bd" style="left:1206px;top:525px">5</div>
<div class="bd" style="left:1194px;top:716px">6</div>
<div class="bd" style="left:998px;top:778px">7</div>
</body></html>
